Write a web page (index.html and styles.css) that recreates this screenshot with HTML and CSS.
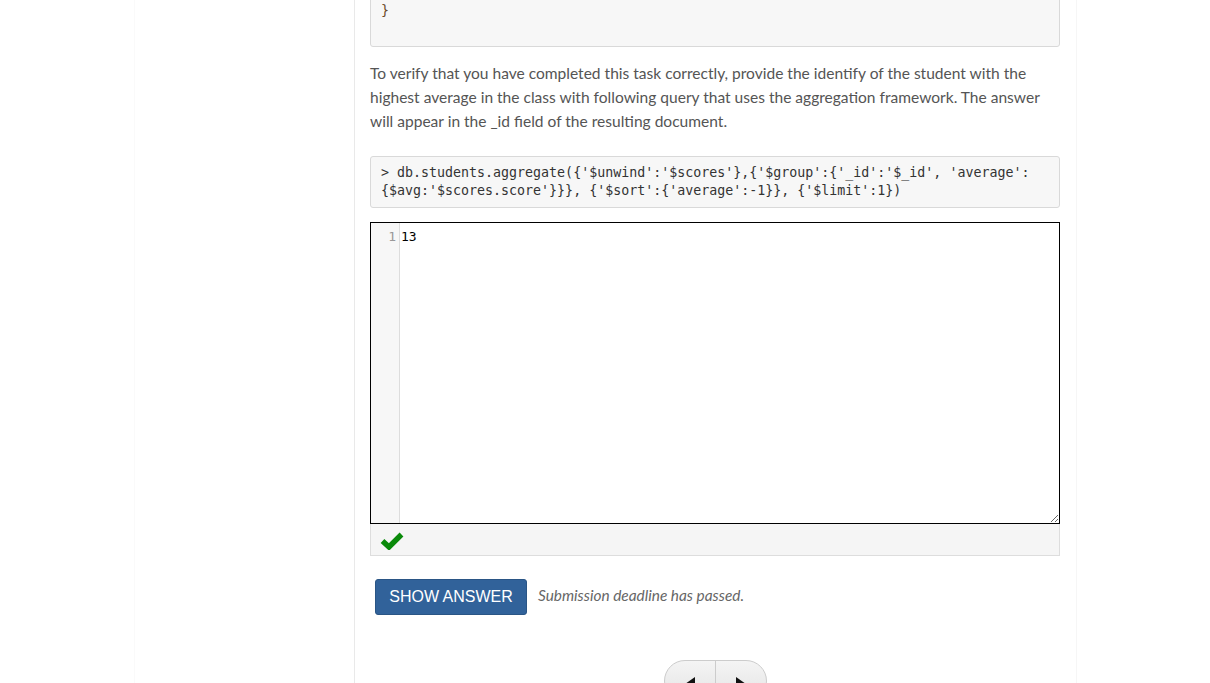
FILE: index.html
```html
<!DOCTYPE html>
<html>
<head>
<meta charset="utf-8">
<link rel="stylesheet" href="styles.css">
</head>
<body>
<div class="page">
  <aside class="sidebar">
    <div class="sidebar-inner"></div>
  </aside>
  <main class="content">
    <pre class="code code-top">}</pre>
    <p class="text">To verify that you have completed this task correctly, provide the identify of the student with the highest average in the class with following query that uses the aggregation framework. The answer will appear in the _id field of the resulting document.</p>
    <pre class="code code-query">&gt; db.students.aggregate({'$unwind':'$scores'},{'$group':{'_id':'$_id', 'average':
{$avg:'$scores.score'}}}, {'$sort':{'average':-1}}, {'$limit':1})</pre>
    <div class="editor">
      <div class="gutter"><div class="lineno">1</div></div>
      <div class="lines"><div class="line">13</div></div>
    </div>
    <div class="status">
      <svg class="check" width="24" height="18" viewBox="0 0 24 18">
        <polyline points="2.5,9 9,15 21.5,2.5" fill="none" stroke="#0a8a0a" stroke-width="5.4"/>
      </svg>
    </div>
    <div class="actions">
      <button class="btn">SHOW ANSWER</button>
      <span class="note">Submission deadline has passed.</span>
    </div>
    <div class="nav">
      <div class="pill">
        <span class="seg"><svg width="12" height="14" viewBox="0 0 12 14"><polygon points="11,0 11,14 1,7" fill="#111"/></svg></span>
        <span class="seg"><svg width="12" height="14" viewBox="0 0 12 14"><polygon points="1,0 1,14 11,7" fill="#111"/></svg></span>
      </div>
    </div>
  </main>
  <div class="rightcol"></div>
</div>
</body>
</html>
```

FILE: styles.css
```css
html, body {
  margin: 0;
  padding: 0;
  background: #fff;
  height: 100%;
  overflow: hidden;
}
.page {
  display: flex;
  height: 683px;
  font-family: "Lato", "Open Sans", sans-serif;
  color: #555;
}
.sidebar {
  width: 355px;
  flex: none;
  border-right: 1px solid #e9e9e9;
  box-sizing: border-box;
  display: flex;
  justify-content: flex-end;
}
.sidebar-inner {
  width: 219px;
  border-left: 1px solid #fafafa;
}
.content {
  width: 690px;
  flex: none;
  padding-left: 15px;
  padding-right: 16px;
}
.rightcol {
  flex: 1;
  border-left: 1px solid #f6f6f6;
}
.code {
  margin: 0;
  background: #f7f7f7;
  border: 1px solid #d9d9d9;
  border-radius: 3px;
  font-family: "DejaVu Sans Mono", monospace;
  font-size: 13.3px;
  line-height: 18px;
  color: #444;
  white-space: pre;
  overflow: hidden;
}
.code-top {
  margin-top: -8px;
  padding: 9px 10px 26px;
  color: #6a4a2a;
}
.code-query {
  padding: 7px 10px;
  color: #333;
}
.text {
  margin: 14px 0 23px;
  font-size: 15.55px;
  line-height: 24px;
}
.editor {
  margin-top: 14px;
  height: 300px;
  border: 1px solid #000;
  display: flex;
  resize: vertical;
  overflow: hidden;
  background: #fff;
}
.gutter {
  width: 28px;
  flex: none;
  background: #f7f7f7;
  border-right: 1px solid #ddd;
  padding-top: 6px;
}
.lineno {
  text-align: right;
  padding-right: 3px;
  font-family: "DejaVu Sans Mono", monospace;
  font-size: 13px;
  line-height: 16px;
  color: #999;
}
.lines {
  flex: 1;
  padding-top: 6px;
  padding-left: 1px;
}
.line {
  font-family: "DejaVu Sans Mono", monospace;
  font-size: 13px;
  line-height: 16px;
  color: #000;
}
.status {
  height: 31px;
  background: #f5f5f5;
  border: 1px solid #ddd;
  border-top: none;
  display: flex;
  align-items: center;
  padding-left: 9px;
}
.check {
  display: block;
  margin-top: 3px;
}
.actions {
  margin-top: 23px;
  padding-left: 5px;
  display: flex;
  align-items: center;
  gap: 11px;
}
.btn {
  width: 152px;
  height: 36px;
  background: #31629a;
  border: 1px solid #2a5585;
  border-radius: 3px;
  color: #fff;
  font-family: "Liberation Sans", Arial, sans-serif;
  font-size: 16px;
  padding: 0;
}
.note {
  font-style: italic;
  font-size: 15.4px;
  color: #666;
  padding-bottom: 4px;
}
.nav {
  margin-top: 45px;
  display: flex;
  justify-content: center;
}
.pill {
  display: flex;
  height: 40px;
  border: 1px solid #ccc;
  border-radius: 22px;
  overflow: hidden;
  background: linear-gradient(#f4f4f4, #e4e4e4);
}
.seg {
  width: 50px;
  display: flex;
  justify-content: center;
  align-items: center;
  padding-top: 6px;
}
.seg + .seg {
  border-left: 1px solid #ccc;
}
```
